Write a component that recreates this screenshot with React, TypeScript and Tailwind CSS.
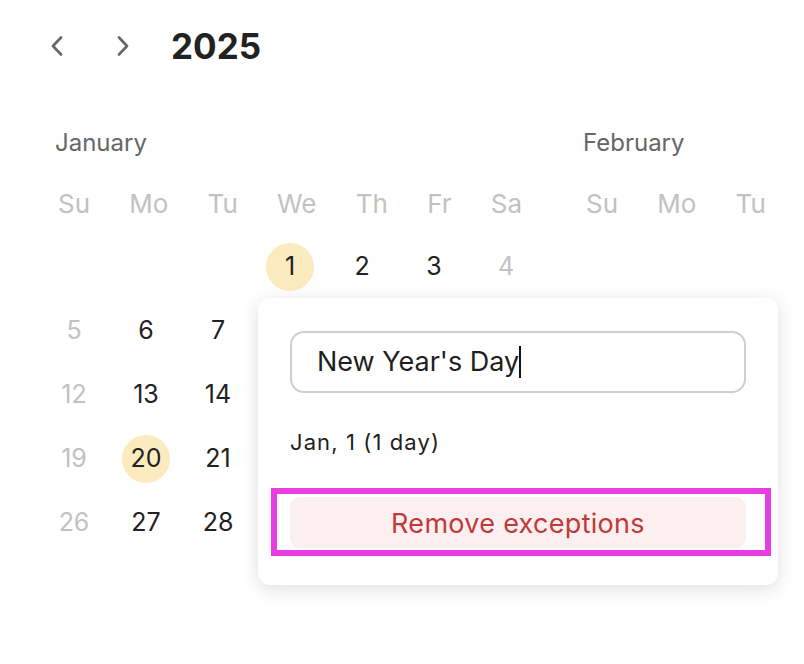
import React from "react";

const WEEKDAYS = ["Su", "Mo", "Tu", "We", "Th", "Fr", "Sa"];

type Cell = { d: number | null };

function buildMonth(startDow: number, days: number): Cell[] {
  const cells: Cell[] = [];
  for (let i = 0; i < startDow; i++) cells.push({ d: null });
  for (let d = 1; d <= days; d++) cells.push({ d });
  return cells;
}

function Month({
  name,
  startDow,
  days,
  highlighted,
}: {
  name: string;
  startDow: number;
  days: number;
  highlighted: number[];
}) {
  const cells = buildMonth(startDow, days);
  return (
    <div className="flex flex-col shrink-0 w-[480px]">
      <div className="pl-[5px] h-[28px] text-[24px] leading-[28px] text-[#666666]">
        {name}
      </div>
      <div className="mt-[22px] h-[48px] px-[8px] flex items-center justify-between text-[26px] text-[#c2c2c2]">
        {WEEKDAYS.map((w) => (
          <span key={w}>{w}</span>
        ))}
      </div>
      <div className="mt-[16px] grid grid-cols-[repeat(7,48px)] auto-rows-[48px] gap-x-[24px] gap-y-[16px]">
        {cells.map((c, i) => {
          const dow = i % 7;
          const weekend = dow === 0 || dow === 6;
          const hl = c.d !== null && highlighted.includes(c.d);
          return (
            <div
              key={i}
              className={
                "flex items-center justify-center rounded-full text-[25px] " +
                (hl ? "bg-[#fbebbf] " : "") +
                (weekend ? "text-[#c2c2c2]" : "text-[#222222]")
              }
            >
              {c.d ?? ""}
            </div>
          );
        })}
      </div>
    </div>
  );
}

export default function App() {
  return (
    <div
      className="relative w-[804px] h-[664px] overflow-hidden bg-white"
      style={{ fontFamily: "Inter, 'Noto Sans', 'Liberation Sans', sans-serif" }}
    >
      {/* header */}
      <div className="flex items-center h-[92px] pl-[45px]">
        <button className="w-[24px] h-[24px] flex items-center justify-center text-[#666666]">
          <svg width="14" height="20" viewBox="0 0 14 20" fill="none">
            <path
              d="M11 1.5 L3 10 L11 18.5"
              stroke="currentColor"
              strokeWidth="2.6"
              strokeLinecap="round"
              strokeLinejoin="round"
            />
          </svg>
        </button>
        <button className="ml-[42px] w-[24px] h-[24px] flex items-center justify-center text-[#666666]">
          <svg width="14" height="20" viewBox="0 0 14 20" fill="none">
            <path
              d="M3 1.5 L11 10 L3 18.5"
              stroke="currentColor"
              strokeWidth="2.6"
              strokeLinecap="round"
              strokeLinejoin="round"
            />
          </svg>
        </button>
        <div className="ml-[36px] text-[35px] font-bold text-[#222222] leading-none">
          2025
        </div>
      </div>

      {/* months */}
      <div className="mt-[37px] flex gap-[48px] pl-[50px]">
        <Month name="January" startDow={3} days={31} highlighted={[1, 20]} />
        <Month name="February" startDow={6} days={28} highlighted={[]} />
      </div>

      {/* popover */}
      <div className="absolute left-[258px] top-[298px] w-[520px] h-[287px] bg-white rounded-[12px] shadow-[0_4px_18px_rgba(0,0,0,0.13)] px-[32px] pt-[33px] flex flex-col">
        <div className="h-[62px] rounded-[14px] border-2 border-[#cfcfcf] flex items-center pl-[25px] text-[27px] text-[#1f1f1f]">
          <span>New Year's Day</span>
          <span className="inline-block w-[2px] h-[32px] bg-[#111111]" />
        </div>
        <div className="mt-[35px] h-[28px] text-[22px] leading-[28px] tracking-[1.1px] text-[#1e1e1e]">
          Jan, 1 (1 day)
        </div>
        <button className="mt-[41px] h-[51px] pt-[3px] rounded-[10px] bg-[#fcefef] text-[27px] tracking-[0.3px] text-[#c1393a] flex items-center justify-center">
          Remove exceptions
        </button>
      </div>

      {/* highlight annotation */}
      <div className="absolute left-[271px] top-[488px] w-[500px] h-[68px] border-[6px] border-[#e83de0] pointer-events-none" />
    </div>
  );
}
